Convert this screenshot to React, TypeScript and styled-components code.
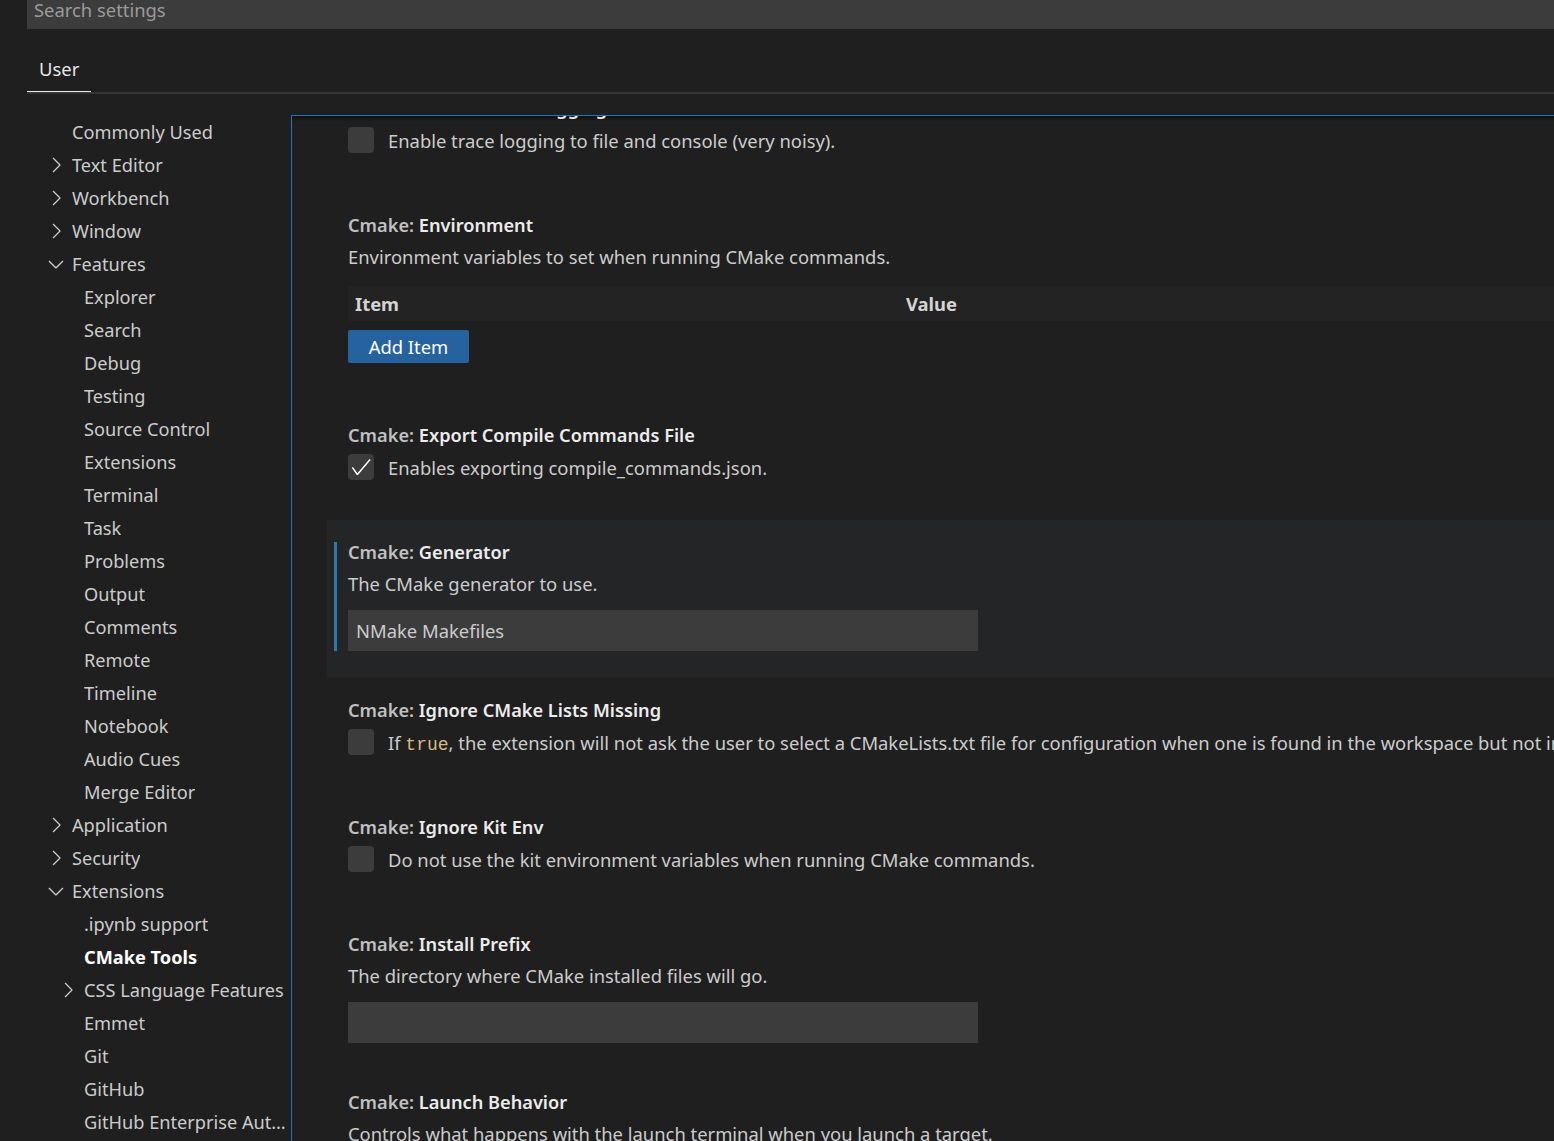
import React from "react";
import styled, { createGlobalStyle } from "styled-components";

const FONT = `"Noto Sans", "Open Sans", sans-serif`;
const MONO = `"Liberation Mono", "DejaVu Sans Mono", monospace`;
const FS = "18.4px";

const GlobalStyle = createGlobalStyle`
  html, body { margin: 0; padding: 0; background: #1f1f1f; }
  body { font-family: ${FONT}; font-size: ${FS}; color: #cccccc; overflow: hidden; }
  * { box-sizing: border-box; }
`;

const Root = styled.div`
  width: 100vw;
  height: 1141px;
  overflow: hidden;
  background: #1f1f1f;
  padding-left: 27px;
`;

const SearchBox = styled.div`
  margin-top: -12px;
  height: 41px;
  padding: 3px 0 0 7px;
  line-height: 37px;
  background: #3c3c3c;
  color: #9a9a9a;
  width: 2000px;
`;

const TabBar = styled.div`
  display: flex;
  height: 65px;
  border-bottom: 2px solid #373737;
`;

const Tab = styled.div<{ $active?: boolean }>`
  display: flex;
  align-items: flex-end;
  padding: 0 12px 8px 12px;
  line-height: 28px;
  color: ${(p) => (p.$active ? "#e7e7e7" : "#9d9d9d")};
  border-bottom: 1px solid ${(p) => (p.$active ? "#e7e7e7" : "transparent")};
`;

const Body = styled.div`
  display: flex;
  margin-top: 21px;
  height: calc(1141px - 115px);
`;

const Sidebar = styled.nav`
  flex: none;
  width: 264px;
  overflow: hidden;
`;

const TreeRow = styled.div<{ $level: number; $bold?: boolean }>`
  display: flex;
  align-items: center;
  height: 33px;
  padding-left: ${(p) => 17 + p.$level * 12}px;
  padding-right: 0;
  font-size: 18.2px;
  color: ${(p) => (p.$bold ? "#ffffff" : "#cccccc")};
  font-weight: ${(p) => (p.$bold ? 700 : 400)};
  white-space: nowrap;
`;

const Twistie = styled.span`
  flex: none;
  width: 24px;
  height: 24px;
  margin-right: 4px;
  display: flex;
  align-items: center;
  justify-content: center;
  color: #cccccc;
`;

const TreeLabel = styled.span`
  overflow: hidden;
  text-overflow: ellipsis;
  min-width: 0;
`;

const Content = styled.main`
  position: relative;
  flex: none;
  width: 1800px;
  border-top: 1px solid #1f74c4;
  border-left: 1px solid #1f74c4;
  overflow: hidden;
  &::before {
    content: "";
    position: absolute;
    left: 0;
    right: 0;
    top: 0;
    height: 6px;
    box-shadow: inset 0 6px 6px -6px #000000;
    pointer-events: none;
  }
`;

const List = styled.div`
  margin-top: -40px;
  padding-left: 35px;
`;

const Item = styled.section<{ $focused?: boolean }>`
  position: relative;
  padding: 18px 0 27px 21px;
  background: ${(p) => (p.$focused ? "#232526" : "transparent")};
`;

const ModifiedBar = styled.div`
  position: absolute;
  left: 7px;
  top: 22px;
  bottom: 27px;
  width: 3px;
  background: #2a7ab0;
`;

const Title = styled.div`
  height: 28px;
  line-height: 28px;
  font-size: 18.2px;
  font-weight: 600;
  white-space: nowrap;
`;

const Category = styled.span`
  color: #c0c0c0;
`;

const Label = styled.span`
  color: #ececec;
`;

const Description = styled.div`
  margin-top: 4px;
  height: 28px;
  line-height: 28px;
  color: #cccccc;
  white-space: nowrap;
`;

const BoolRow = styled.div`
  display: flex;
  align-items: center;
  gap: 14px;
  margin-top: 5px;
  margin-bottom: 13px;
  height: 26px;
  white-space: nowrap;
`;

const Checkbox = styled.div`
  flex: none;
  width: 26px;
  height: 26px;
  border-radius: 4px;
  background: #3c3c3c;
  display: flex;
  align-items: center;
  justify-content: center;
  color: #ffffff;
`;

const Code = styled.code`
  font-family: ${MONO};
  font-size: 18px;
  color: #d7ba7d;
`;

const TableHeader = styled.div`
  display: grid;
  grid-template-columns: 551px 1fr;
  margin-top: 15px;
  height: 35px;
  line-height: 35px;
  background: #232323;
  font-weight: 700;
  color: #d4d4d4;
`;

const HeaderCell = styled.div`
  padding-left: 7px;
`;

const Button = styled.button`
  display: block;
  margin: 9px 0 13px 0;
  height: 33px;
  width: 121px;
  padding: 0;
  border: none;
  border-radius: 2px;
  background: #26629f;
  color: #ffffff;
  font-family: ${FONT};
  font-size: ${FS};
  line-height: 33px;
`;

const TextInput = styled.div`
  margin-top: 12px;
  width: 630px;
  height: 41px;
  line-height: 41px;
  padding-left: 8px;
  background: #3c3c3c;
  color: #cccccc;
`;

const ChevronRight = () => (
  <svg width="24" height="24" viewBox="0 0 16 16" fill="currentColor">
    <path d="M10.072 8.024L5.715 3.667l.618-.62L11 7.716v.618L6.333 13l-.618-.619 4.357-4.357z" />
  </svg>
);

const ChevronDown = () => (
  <svg width="24" height="24" viewBox="0 0 16 16" fill="currentColor">
    <path d="M7.976 10.072l4.357-4.357.62.618L8.284 11h-.618L3 6.333l.619-.618 4.357 4.357z" />
  </svg>
);

const Check = () => (
  <svg width="24" height="24" viewBox="0 0 16 16" fill="currentColor">
    <path d="M14.431 3.323l-8.47 10-.79-.036-3.35-4.77.818-.574 2.978 4.24 8.051-9.506.764.646z" />
  </svg>
);

type Node = { label: string; level: number; twist?: "open" | "closed"; bold?: boolean };

const tree: Node[] = [
  { label: "Commonly Used", level: 0 },
  { label: "Text Editor", level: 0, twist: "closed" },
  { label: "Workbench", level: 0, twist: "closed" },
  { label: "Window", level: 0, twist: "closed" },
  { label: "Features", level: 0, twist: "open" },
  { label: "Explorer", level: 1 },
  { label: "Search", level: 1 },
  { label: "Debug", level: 1 },
  { label: "Testing", level: 1 },
  { label: "Source Control", level: 1 },
  { label: "Extensions", level: 1 },
  { label: "Terminal", level: 1 },
  { label: "Task", level: 1 },
  { label: "Problems", level: 1 },
  { label: "Output", level: 1 },
  { label: "Comments", level: 1 },
  { label: "Remote", level: 1 },
  { label: "Timeline", level: 1 },
  { label: "Notebook", level: 1 },
  { label: "Audio Cues", level: 1 },
  { label: "Merge Editor", level: 1 },
  { label: "Application", level: 0, twist: "closed" },
  { label: "Security", level: 0, twist: "closed" },
  { label: "Extensions", level: 0, twist: "open" },
  { label: ".ipynb support", level: 1 },
  { label: "CMake Tools", level: 1, bold: true },
  { label: "CSS Language Features", level: 1, twist: "closed" },
  { label: "Emmet", level: 1 },
  { label: "Git", level: 1 },
  { label: "GitHub", level: 1 },
  { label: "GitHub Enterprise Authentication", level: 1 },
];

const SettingTitle = ({ label }: { label: string }) => (
  <Title>
    <Category>Cmake: </Category>
    <Label>{label}</Label>
  </Title>
);

const BoolSetting = ({ label, checked, children }: { label: string; checked?: boolean; children: React.ReactNode }) => (
  <Item>
    <SettingTitle label={label} />
    <BoolRow>
      <Checkbox>{checked && <Check />}</Checkbox>
      <span>{children}</span>
    </BoolRow>
  </Item>
);

export default function App() {
  return (
    <>
      <GlobalStyle />
      <Root>
        <SearchBox>Search settings</SearchBox>
        <TabBar>
          <Tab $active>User</Tab>
        </TabBar>
        <Body>
          <Sidebar>
            {tree.map((n, i) => (
              <TreeRow key={i} $level={n.level} $bold={n.bold}>
                <Twistie>
                  {n.twist === "closed" && <ChevronRight />}
                  {n.twist === "open" && <ChevronDown />}
                </Twistie>
                <TreeLabel>{n.label}</TreeLabel>
              </TreeRow>
            ))}
          </Sidebar>
          <Content>
            <List>
              <BoolSetting label="Enable Trace Logging">
                Enable trace logging to file and console (very noisy).
              </BoolSetting>
              <Item>
                <SettingTitle label="Environment" />
                <Description>Environment variables to set when running CMake commands.</Description>
                <TableHeader>
                  <HeaderCell>Item</HeaderCell>
                  <HeaderCell>Value</HeaderCell>
                </TableHeader>
                <Button>Add Item</Button>
              </Item>
              <BoolSetting label="Export Compile Commands File" checked>
                Enables exporting compile_commands.json.
              </BoolSetting>
              <Item $focused>
                <ModifiedBar />
                <SettingTitle label="Generator" />
                <Description>The CMake generator to use.</Description>
                <TextInput>NMake Makefiles</TextInput>
              </Item>
              <BoolSetting label="Ignore CMake Lists Missing">
                If <Code>true</Code>, the extension will not ask the user to select a CMakeLists.txt file for
                configuration when one is found in the workspace but not in the root folder.
              </BoolSetting>
              <BoolSetting label="Ignore Kit Env">
                Do not use the kit environment variables when running CMake commands.
              </BoolSetting>
              <Item>
                <SettingTitle label="Install Prefix" />
                <Description>The directory where CMake installed files will go.</Description>
                <TextInput />
              </Item>
              <Item>
                <SettingTitle label="Launch Behavior" />
                <Description>Controls what happens with the launch terminal when you launch a target.</Description>
              </Item>
            </List>
          </Content>
        </Body>
      </Root>
    </>
  );
}
